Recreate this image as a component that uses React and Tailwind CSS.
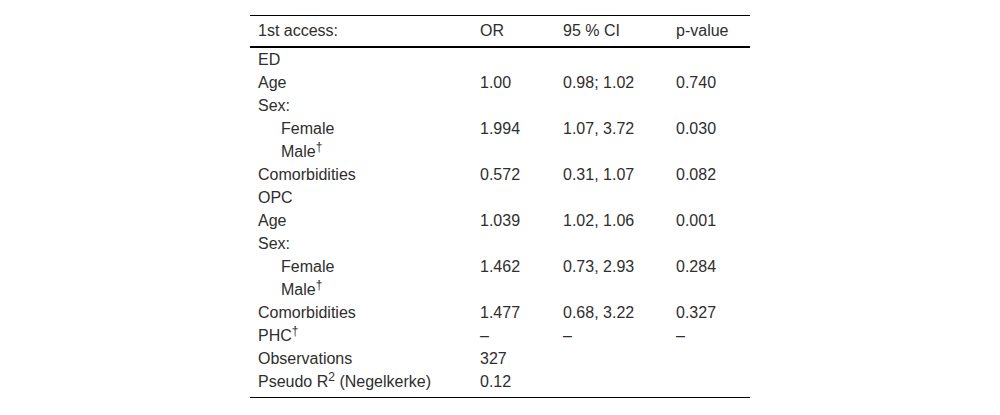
const rows = [
  { label: "ED" },
  { label: "Age", or: "1.00", ci: "0.98; 1.02", p: "0.740" },
  { label: "Sex:" },
  { label: "Female", indent: true, or: "1.994", ci: "1.07, 3.72", p: "0.030" },
  { label: "Male", indent: true, dagger: true },
  { label: "Comorbidities", or: "0.572", ci: "0.31, 1.07", p: "0.082" },
  { label: "OPC" },
  { label: "Age", or: "1.039", ci: "1.02, 1.06", p: "0.001" },
  { label: "Sex:" },
  { label: "Female", indent: true, or: "1.462", ci: "0.73, 2.93", p: "0.284" },
  { label: "Male", indent: true, dagger: true },
  { label: "Comorbidities", or: "1.477", ci: "0.68, 3.22", p: "0.327" },
  { label: "PHC", dagger: true, or: "–", ci: "–", p: "–" },
  { label: "Observations", or: "327" },
  { label: "Pseudo R", sq: true, tail: " (Negelkerke)", or: "0.12" },
];

const grid = "grid grid-cols-[222px_83px_113px_1fr]";

const App = () => {
  return (
    <div
      className="h-[415px] w-full bg-white pt-[15px] text-[16px] text-[#2e2e2e]"
      style={{ fontFamily: '"Liberation Sans", Arial, sans-serif' }}
    >
      <div className="mx-auto w-[500px] border-y border-t-black border-b-black pb-[4px]">
        <div className={`${grid} h-[32px] items-center border-b-2 border-black leading-[18px]`}>
          <div className="px-2">1st access:</div>
          <div className="px-2">OR</div>
          <div className="px-2">95 % CI</div>
          <div className="px-2">p-value</div>
        </div>

        {rows.map((r, i) => (
          <div key={i} className={`${grid} leading-[23px]`}>
            <div className={r.indent ? "pl-[31px] pr-2" : "px-2"}>
              {r.label}
              {r.dagger && <sup className="text-[12px]">†</sup>}
              {r.sq && <sup className="text-[12px]">2</sup>}
              {r.tail}
            </div>
            <div className="px-2">{r.or}</div>
            <div className="px-2">{r.ci}</div>
            <div className="px-2">{r.p}</div>
          </div>
        ))}
      </div>
    </div>
  );
};

export default App;
